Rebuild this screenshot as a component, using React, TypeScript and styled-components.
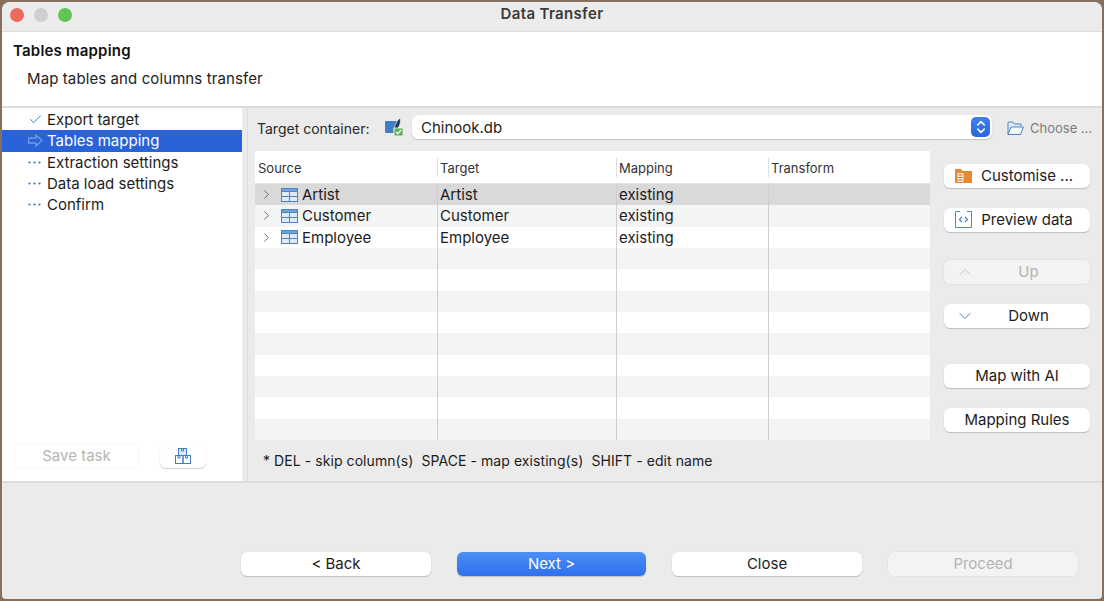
import React from 'react';
import styled, { createGlobalStyle } from 'styled-components';
import { ChevronRight, ChevronUp, ChevronDown, ChevronsUpDown, Check } from 'lucide-react';

const GlobalStyle = createGlobalStyle`
  html, body { margin: 0; padding: 0; height: 100%; background: #86705f; }
  * { box-sizing: border-box; }
  body { font-family: Inter, "Liberation Sans", sans-serif; color: #1c1c1c; -webkit-font-smoothing: antialiased; }
`;

const steps = [
  { label: 'Export target', state: 'done' },
  { label: 'Tables mapping', state: 'active' },
  { label: 'Extraction settings', state: 'todo' },
  { label: 'Data load settings', state: 'todo' },
  { label: 'Confirm', state: 'todo' },
];

const columns = ['Source', 'Target', 'Mapping', 'Transform'];
const rows = ['Artist', 'Customer', 'Employee'];

function TableIcon() {
  return (
    <svg width="17" height="14" viewBox="0 0 17 14">
      <rect x="0.5" y="0.5" width="16" height="13" fill="#dfeaf6" stroke="#4a86c5" />
      <rect x="0.5" y="0.5" width="16" height="3" fill="#6fa3d8" stroke="#4a86c5" />
      <path d="M0.5 8.5H16.5M8.5 3.5V13.5" stroke="#4a86c5" fill="none" />
    </svg>
  );
}

function DbIcon() {
  return (
    <svg width="18" height="18" viewBox="0 0 18 18">
      <rect x="0" y="3" width="13" height="12" rx="1" fill="#3f7fc4" />
      <path d="M8.500 13 C9.500 8 11.500 3 15 0 C16.500 4 14 10 10.500 13Z" fill="#1f3550" stroke="#fff" strokeWidth="0.6" />
      <rect x="9" y="10" width="9" height="8" fill="#5db14e" stroke="#fff" strokeWidth="0.8" />
      <path d="M11 14l1.800 1.800L16 12" stroke="#fff" strokeWidth="1.300" fill="none" />
    </svg>
  );
}

function StepArrow() {
  return (
    <svg width="15" height="13" viewBox="0 0 15 13" fill="none" stroke="#6f9de0" strokeWidth="1.3">
      <path d="M0.7 4H8V1l6 5.5-6 5.500V9H0.700Z" />
    </svg>
  );
}

function StepDots() {
  return (
    <svg width="13" height="3" viewBox="0 0 13 3" fill="#2f74c0">
      <circle cx="1.500" cy="1.500" r="1.100" />
      <circle cx="6.500" cy="1.500" r="1.100" />
      <circle cx="11.500" cy="1.500" r="1.100" />
    </svg>
  );
}

function FolderIcon() {
  return (
    <svg width="17" height="15" viewBox="0 0 17 15" fill="none" stroke="#4a86c5">
      <path d="M1 13.5V2a1 1 0 0 1 1-1h4l1.500 2H14v2.500" fill="#dfeaf6" />
      <path d="M1 13.5L4 6h12.500l-3 7.500Z" fill="#f4f8fc" />
    </svg>
  );
}

function CustomiseIcon() {
  return (
    <svg width="17" height="15" viewBox="0 0 17 15">
      <path d="M0 1h6l1.500 2H17v12H0Z" fill="#e58a32" />
      <rect x="2.500" y="5" width="6" height="9" fill="#fbe8d2" />
      <path d="M3.500 7h4M3.500 9.500h4M3.500 12h4" stroke="#c46d1e" />
    </svg>
  );
}

function PreviewIcon() {
  return (
    <svg width="17" height="17" viewBox="0 0 17 17" fill="none" stroke="#4a86c5">
      <path d="M5 .5H.5v16h16V.5H12" />
      <path d="M7 6L4.500 8.500 7 11M10 6l2.500 2.500L10 11" strokeWidth="1.200" />
    </svg>
  );
}

function BoxesIcon() {
  return (
    <svg width="16" height="16" viewBox="0 0 16 16" fill="none" stroke="#3f7fc4">
      <rect x="3.500" y="0.500" width="8" height="7" fill="#dfeaf6" />
      <rect x="0.500" y="7.500" width="7.500" height="8" />
      <rect x="8" y="7.500" width="7.500" height="8" />
      <path d="M6.500 .5v2.500h2V.5M3 7.500V10h2V7.500M10.500 7.500V10h2V7.500" />
    </svg>
  );
}

export default function App() {
  return (
    <>
      <GlobalStyle />
      <Frame>
        <Window>
          <TitleBar>
            <Lights>
              <Light $color="#ec6a5e" />
              <Light $color="#cfcfcf" />
              <Light $color="#61c554" />
            </Lights>
            <WindowTitle>Data Transfer</WindowTitle>
          </TitleBar>

          <Header>
            <HeaderTitle>Tables mapping</HeaderTitle>
            <HeaderText>Map tables and columns transfer</HeaderText>
          </Header>

          <Body>
            <Sidebar>
              <StepList>
                {steps.map((step) => (
                  <Step key={step.label} $active={step.state === 'active'}>
                    <StepMark>
                      {step.state === 'done' && <Check size={15} strokeWidth={1.6} color="#3f7fc4" />}
                      {step.state === 'active' && <StepArrow />}
                      {step.state === 'todo' && <StepDots />}
                    </StepMark>
                    {step.label}
                  </Step>
                ))}
              </StepList>
              <SidebarActions>
                <PushButton $disabled $width="123px">Save task</PushButton>
                <PushButton $width="46px"><BoxesIcon /></PushButton>
              </SidebarActions>
            </Sidebar>
            <Sash />

            <Content>
              <ContainerRow>
                <FieldLabel>Target container:</FieldLabel>
                <DbIcon />
                <Select>
                  Chinook.db
                  <SelectArrow><ChevronsUpDown size={16} strokeWidth={2.4} color="#fff" /></SelectArrow>
                </Select>
                <ChooseLink><FolderIcon />Choose ...</ChooseLink>
              </ContainerRow>

              <Workspace>
                <TableColumn>
                  <MappingTable>
                    <HeaderRow>
                      {columns.map((c) => <HeaderCell key={c}>{c}</HeaderCell>)}
                    </HeaderRow>
                    {Array.from({ length: 12 }).map((_, i) => {
                      const name = rows[i];
                      return (
                        <DataRow key={i} $index={i}>
                          <Cell>
                            {name && (
                              <SourceCell>
                                <ExpandIcon><ChevronRight size={15} strokeWidth={1.5} color="#666" /></ExpandIcon>
                                <TableIcon />
                                {name}
                              </SourceCell>
                            )}
                          </Cell>
                          <Cell>{name}</Cell>
                          <Cell>{name && 'existing'}</Cell>
                          <Cell />
                        </DataRow>
                      );
                    })}
                  </MappingTable>
                  <Hint>* DEL - skip column(s)&nbsp; SPACE - map existing(s)&nbsp; SHIFT - edit name</Hint>
                </TableColumn>

                <ButtonColumn>
                  <PushButton $gapAfter="20px" $withIcon><ButtonIcon><CustomiseIcon /></ButtonIcon><ButtonLabel>Customise ...</ButtonLabel></PushButton>
                  <PushButton $gapAfter="28px" $withIcon><ButtonIcon><PreviewIcon /></ButtonIcon><ButtonLabel>Preview data</ButtonLabel></PushButton>
                  <PushButton $disabled $gapAfter="20px" $withIcon><ButtonIcon><ChevronUp size={20} strokeWidth={1.2} color="#b4c8e0" /></ButtonIcon><ButtonLabel>Up</ButtonLabel></PushButton>
                  <PushButton $gapAfter="36px" $withIcon><ButtonIcon><ChevronDown size={20} strokeWidth={1.2} color="#3f7fc4" /></ButtonIcon><ButtonLabel>Down</ButtonLabel></PushButton>
                  <PushButton $gapAfter="20px">Map with AI</PushButton>
                  <PushButton>Mapping Rules</PushButton>
                </ButtonColumn>
              </Workspace>
            </Content>
          </Body>

          <Footer>
            <PushButton $width="190px">&lt; Back</PushButton>
            <PushButton $width="189px" $primary>Next &gt;</PushButton>
            <PushButton $width="190px">Close</PushButton>
            <PushButton $width="190px" $disabled>Proceed</PushButton>
          </Footer>
        </Window>
      </Frame>
    </>
  );
}

const Frame = styled.div`
  width: 1104px;
  height: 601px;
  padding: 2px;
  background: #86705f;
`;

const Window = styled.div`
  width: 100%;
  height: 100%;
  display: flex;
  flex-direction: column;
  background: #ebebeb;
  border-radius: 8px 8px 4px 4px;
  overflow: hidden;
`;

const TitleBar = styled.div`
  position: relative;
  flex: 0 0 30px;
  display: flex;
  align-items: center;
  justify-content: center;
  padding-bottom: 6px;
  background: #ececec;
  border-bottom: 1px solid #dedede;
`;

const Lights = styled.div`
  position: absolute;
  left: 8px;
  top: 6px;
  display: flex;
  gap: 10px;
`;

const Light = styled.span<{ $color: string }>`
  width: 14px;
  height: 14px;
  border-radius: 50%;
  background: ${(p) => p.$color};
`;

const WindowTitle = styled.div`
  font-size: 15px;
  font-weight: 600;
  letter-spacing: 0.35px;
  color: #3a3a3a;
`;

const Header = styled.div`
  flex: 0 0 76px;
  padding: 10px 11px;
  background: #fff;
  border-bottom: 2px solid #dcdcdc;
`;

const HeaderTitle = styled.div`
  font-size: 15px;
  font-weight: 600;
  letter-spacing: 0.2px;
  line-height: 17px;
  color: #111;
`;

const HeaderText = styled.div`
  margin: 11px 0 0 14px;
  font-size: 15px;
  letter-spacing: 0.1px;
  line-height: 17px;
  color: #222;
`;

const Body = styled.div`
  flex: 0 0 375px;
  display: flex;
  border-bottom: 2px solid #dcdcdc;
`;

const Sidebar = styled.div`
  flex: 0 0 240px;
  display: flex;
  flex-direction: column;
  justify-content: space-between;
  background: #fff;
`;

const Sash = styled.div`
  flex: 0 0 6px;
  background: #ebebeb;
  border-right: 1px solid #dcdcdc;
`;

const StepList = styled.div`
  margin-top: 1px;
`;

const Step = styled.div<{ $active?: boolean }>`
  height: 21.3px;
  display: flex;
  align-items: center;
  padding-left: 26px;
  font-size: 15px;
  color: ${(p) => (p.$active ? '#fff' : '#1c1c1c')};
  background: ${(p) => (p.$active ? '#2a62d9' : 'transparent')};
`;

const StepMark = styled.span`
  flex: 0 0 19px;
  display: flex;
  align-items: center;
`;

const SidebarActions = styled.div`
  display: flex;
  justify-content: space-between;
  padding: 0 36px 13px 13px;
`;

const Content = styled.div`
  flex: 1;
  display: flex;
  flex-direction: column;
  padding: 7px 12px 0 7px;
`;

const ContainerRow = styled.div`
  display: flex;
  align-items: center;
  height: 24px;
`;

const FieldLabel = styled.span`
  font-size: 14px;
  width: 130px;
  padding: 3px 0 0 2px;
  color: #2a2a2a;
  white-space: nowrap;
`;

const Select = styled.div`
  width: 580px;
  height: 24px;
  margin-left: 9px;
  padding-left: 9px;
  display: flex;
  align-items: center;
  justify-content: space-between;
  background: #fff;
  border-radius: 6px;
  font-size: 15px;
  box-shadow: 0 1px 1px rgba(0, 0, 0, 0.16), 0 0 1px rgba(0, 0, 0, 0.12);
`;

const SelectArrow = styled.span`
  width: 19px;
  height: 20px;
  margin-right: 2px;
  display: flex;
  align-items: center;
  justify-content: center;
  background: linear-gradient(#3f80ee, #2a66e0);
  border-radius: 5px;
`;

const ChooseLink = styled.span`
  display: flex;
  align-items: center;
  gap: 6px;
  margin-left: 15px;
  padding-top: 2px;
  font-size: 13px;
  color: #7b7b7b;
  white-space: nowrap;
`;

const Workspace = styled.div`
  display: flex;
  margin-top: 12px;
`;

const TableColumn = styled.div`
  width: 675px;
`;

const MappingTable = styled.div`
  height: 289px;
  overflow: hidden;
  background: #fff;
`;

const grid = `
  display: grid;
  grid-template-columns: 182px 179px 152px 162px;
`;

const HeaderRow = styled.div`
  ${grid}
  align-items: center;
  height: 33px;
  padding-top: 1px;
  border-bottom: 1px solid #e2e2e2;
`;

const HeaderCell = styled.div`
  display: flex;
  align-items: center;
  height: 19px;
  padding-left: 2px;
  font-size: 13px;
  color: #333;
  border-left: 1px solid #dedede;
  &:first-child { border-left: none; padding-left: 3px; }
`;

const DataRow = styled.div<{ $index: number }>`
  ${grid}
  height: 21.33px;
  background: ${(p) =>
    p.$index === 0 ? '#d9d9d9' : p.$index % 2 === 1 ? '#f3f5f4' : '#fff'};
`;

const Cell = styled.div`
  display: flex;
  align-items: center;
  padding-left: 2px;
  font-size: 15px;
  color: #1c1c1c;
  border-left: 1px solid #cfcfcf;
  &:first-child { border-left: none; padding-left: 3px; }
`;

const SourceCell = styled.div`
  display: flex;
  align-items: center;
  gap: 4px;
  padding-left: 1px;
`;

const ExpandIcon = styled.span`
  display: flex;
  margin-right: 3px;
`;

const Hint = styled.div`
  margin: 13px 0 0 8px;
  font-size: 14px;
  letter-spacing: 0.07px;
  line-height: 16px;
  color: #1c1c1c;
  white-space: nowrap;
`;

const ButtonColumn = styled.div`
  display: flex;
  flex-direction: column;
  width: 146px;
  margin: 13px 0 0 14px;
`;

const ButtonIcon = styled.span`
  flex: 0 0 17px;
  display: flex;
  align-items: center;
  justify-content: center;
`;

const ButtonLabel = styled.span`
  flex: 1;
  text-align: center;
`;

const PushButton = styled.div<{
  $primary?: boolean;
  $disabled?: boolean;
  $withIcon?: boolean;
  $width?: string;
  $gapAfter?: string;
}>`
  flex: 0 0 auto;
  height: 24px;
  width: ${(p) => p.$width ?? '100%'};
  margin-bottom: ${(p) => p.$gapAfter ?? '0'};
  padding: ${(p) => (p.$withIcon ? '0 8px 1px 11px' : '0 0 1px')};
  display: flex;
  align-items: center;
  justify-content: center;
  font-size: 15px;
  white-space: nowrap;
  border-radius: 6px;
  background: ${(p) =>
    p.$primary
      ? 'linear-gradient(#4a8ff5, #2f70f0)'
      : p.$disabled
      ? 'rgba(255, 255, 255, 0.4)'
      : '#fff'};
  color: ${(p) => (p.$primary ? '#fff' : p.$disabled ? '#b5b5b5' : '#1c1c1c')};
  box-shadow: ${(p) =>
    p.$disabled
      ? '0 0 1.5px rgba(0, 0, 0, 0.14)'
      : '0 1px 1px rgba(0, 0, 0, 0.18), 0 0 1px rgba(0, 0, 0, 0.12)'};
`;

const Footer = styled.div`
  flex: 1;
  display: flex;
  align-items: flex-start;
  gap: 26px;
  padding: 69px 0 0 239px;
`;
